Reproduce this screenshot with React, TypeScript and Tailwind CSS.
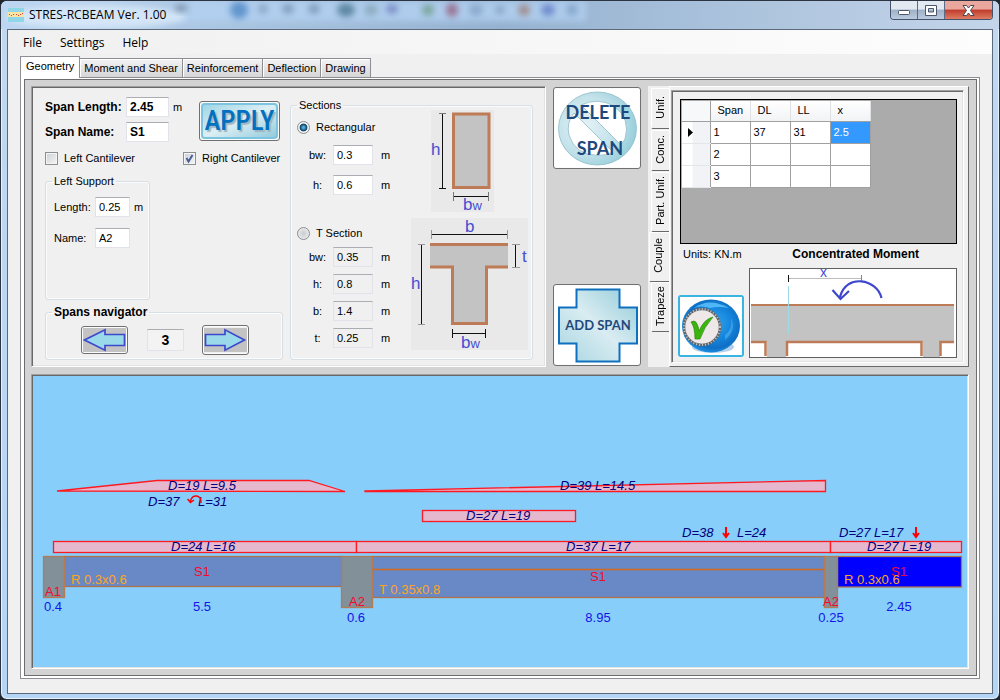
import { useState } from "react";
import type { ReactNode } from "react";

const SUNKEN =
  "border border-t-[#a0a0a0] border-l-[#a0a0a0] border-r-white border-b-white shadow-[inset_1px_1px_0_#696969,inset_-1px_-1px_0_#e3e3e3]";
const FIELD =
  "h-5 border border-[#e2e3ea] border-t-[#abadb3] px-[3px] text-black outline-none";
const PUSH =
  "rounded-[3px] border border-[#707070] bg-[#f0f0f0] shadow-[inset_0_0_0_1px_#fcfcfc] flex items-center justify-center overflow-hidden";

function AppIcon() {
  return (
    <svg width="16" height="14" viewBox="0 0 16 14" aria-hidden="true">
      <rect width="16" height="14" fill="#8fd6e6" />
      <rect y="4" width="16" height="5" fill="#fbe3a6" />
      <path d="M1 6.500h1M3 7.500h1M5 6.500h1M8 6.500h1M10 7.500h1M12 6.500h1M14 5.500h1" stroke="#d8442e" />
    </svg>
  );
}

function GlassReflections() {
  const spots = [
    [180, 7, 7, 4, "#6d8196"], [238, 9, 9, 9, "#3f7fc0"], [262, 8, 5, 5, "#7d97b5"],
    [287, 8, 6, 5, "#7089a8"], [313, 8, 6, 5, "#7089a8"], [345, 9, 9, 7, "#3d6c83"],
    [370, 9, 7, 6, "#7da0b0"], [391, 8, 6, 5, "#6876b8"], [427, 9, 6, 6, "#66967c"],
    [451, 9, 6, 7, "#91506f"], [475, 9, 7, 6, "#7a9cc0"], [499, 9, 5, 4, "#7694b4"],
    [523, 9, 6, 6, "#9a7469"], [547, 9, 7, 6, "#5470c0"], [571, 9, 6, 6, "#789ac0"],
  ] as const;
  return (
    <svg className="absolute inset-0 h-full w-full" aria-hidden="true">
      <defs>
        <filter id="soft" x="-50%" y="-50%" width="200%" height="200%">
          <feGaussianBlur stdDeviation="3" />
        </filter>
      </defs>
      <rect x="170" y="0" width="415" height="20" fill="#b3d1f2" opacity="0.800" filter="url(#soft)" />
      <ellipse cx="95" cy="16" rx="90" ry="12" fill="#dcebfa" opacity="0.800" filter="url(#soft)" />
      {spots.map(([x, y, rx, ry, fill]) => (
        <ellipse key={x} cx={x} cy={y} rx={rx} ry={ry} fill={fill} opacity="0.700" filter="url(#soft)" />
      ))}
    </svg>
  );
}

function TitleBar() {
  return (
    <header className="relative flex h-[28px] items-start overflow-hidden rounded-t-[6px] bg-linear-to-r from-[#bdd6f1] via-[#95b2d0] to-[#c4d5ea]">
      <GlassReflections />
      <div className="relative flex h-[27px] flex-1 items-center gap-[5px] pl-[7px] font-['Open_Sans',sans-serif] text-[12px] text-black">
        <AppIcon />
        <h1>STRES-RCBEAM Ver. 1.00</h1>
      </div>
      <div className="relative mr-[6px] flex h-[19px] overflow-hidden rounded-b-[4px] border border-t-0 border-[#42536b]">
        <button aria-label="Minimize" className="flex w-[27px] items-center justify-center border-r border-[#5b6d86] bg-linear-to-b from-[#e3e9f1] from-45% via-[#9fb1c7] via-50% to-[#bccbdd]">
          <svg width="13" height="6" className="mt-[6px]"><rect x="0.500" y="0.500" width="11" height="4" rx="1" fill="#fff" stroke="#4d566b" /></svg>
        </button>
        <button aria-label="Maximize" className="flex w-[27px] items-center justify-center border-r border-[#5b6d86] bg-linear-to-b from-[#e3e9f1] from-45% via-[#9fb1c7] via-50% to-[#bccbdd]">
          <svg width="12" height="11"><path fillRule="evenodd" d="M.5.5h11v10H.5zM3.500 3.500h5v3.500h-5z" fill="#fff" stroke="#4d566b" /></svg>
        </button>
        <button aria-label="Close" className="flex w-[47px] items-center justify-center bg-linear-to-b from-[#eaa79d] from-45% via-[#c0392a] via-50% to-[#dd7c62]">
          <svg width="13" height="11" viewBox="0 0 13 11"><path d="M1 .5h3.500L6.500 3 8.500.5H12L8.500 5.500 12 10.500H8.500L6.500 8 4.500 10.500H1L4.500 5.500z" fill="#fff" stroke="#4d4450" /></svg>
        </button>
      </div>
    </header>
  );
}

function GroupBox({ title, bold, className, children }: { title: string; bold?: boolean; className: string; children: ReactNode }) {
  return (
    <fieldset className={"rounded-[3px] border border-[#d5dfe5] shadow-[inset_0_0_0_1px_#fbfbfb] " + className}>
      <legend className={"ml-[6px] px-[2px] leading-[13px] " + (bold ? "text-[12px] font-bold" : "")}>{title}</legend>
      {children}
    </fieldset>
  );
}

function Check({ label, checked }: { label: string; checked?: boolean }) {
  return (
    <label className="flex h-[13px] items-center gap-[6px]">
      <span className="grid size-[13px]">
        <input type="checkbox" defaultChecked={checked} className="peer col-start-1 row-start-1 size-[13px] appearance-none border border-[#8e8f8f] bg-linear-to-br from-[#cbcfd5] to-[#f6f6f6] shadow-[inset_0_0_0_1px_#f4f4f4]" />
        <svg viewBox="0 0 13 13" className="pointer-events-none col-start-1 row-start-1 hidden peer-checked:block">
          <path d="M3.500 6 5.500 9.500 9.500 3" fill="none" stroke="#4b5f97" strokeWidth="2" />
        </svg>
      </span>
      {label}
    </label>
  );
}

function SectionRadio({ label, checked }: { label: string; checked?: boolean }) {
  return (
    <label className="flex h-[14px] items-center gap-[6px]">
      <input type="radio" name="section" defaultChecked={checked} className="-ml-px size-[13px] appearance-none rounded-full border border-[#8e8f8f] bg-radial from-[#c9ccd0] to-[#f4f4f4] checked:from-[#4fb2dc] checked:from-10% checked:via-[#123e60] checked:via-45% checked:to-[#eef2f5] checked:to-55%" />
      {label}
    </label>
  );
}

function Measure({ id, label, value, disabled }: { id: string; label: string; value: string; disabled?: boolean }) {
  return (
    <div className="grid grid-cols-[31px_40px_auto] items-center">
      <label htmlFor={id} className="text-center">{label}</label>
      <input id={id} defaultValue={value} readOnly={disabled} className={FIELD + (disabled ? " w-10 bg-[#f0f0f0]" : " w-10 bg-white")} />
      <span className="pl-[8px]">m</span>
    </div>
  );
}

function RectangleSketch() {
  return (
    <svg width="63" height="102" viewBox="431 110 63 102" className="overflow-visible font-['Liberation_Sans',sans-serif]">
      <rect x="431" y="110" width="63" height="102" fill="#e9e9e9" />
      <rect x="453.500" y="114" width="35.500" height="73.500" fill="#c3c3c3" stroke="#bd7b57" strokeWidth="3" />
      <path d="M442.500 113V188M439 188.500h7M453.500 196.500h35" stroke="#111" fill="none" />
      <path d="M439 113.500h7M453.500 192v9M488.500 192v9" stroke="#777" fill="none" />
      <text x="431" y="155" fontSize="17" fill="#474fd0">h</text>
      <text x="463" y="210" fontSize="17" fill="#474fd0">b<tspan fontSize="13">w</tspan></text>
    </svg>
  );
}

function TeeSketch() {
  return (
    <svg width="117" height="132" viewBox="411 218 117 132" className="overflow-visible font-['Liberation_Sans',sans-serif]">
      <rect x="411" y="218" width="117" height="132" fill="#e9e9e9" />
      <path d="M430 244.500H508V267H486.500V323.500H452.500V267H430Z" fill="#c3c3c3" />
      <path d="M430 244.500H508M430 267H452.500V323.500H486.500V267H508" stroke="#bd7b57" strokeWidth="3" fill="none" />
      <path d="M431 234.500h77M421.500 245v79M515.500 245v22M452 333.500h34M452.500 329v9M485.500 329v9" stroke="#111" fill="none" />
      <path d="M431.500 230v9M507.500 230v9M418 244.500h7M418 324.500h7M512 244.500h8M512 267.500h8" stroke="#999" fill="none" />
      <text x="465" y="232" fontSize="17" fill="#474fd0">b</text>
      <text x="411" y="289" fontSize="17" fill="#474fd0">h</text>
      <text x="522" y="262" fontSize="17" fill="#474fd0">t</text>
      <text x="461" y="348" fontSize="17" fill="#474fd0">b<tspan fontSize="13">w</tspan></text>
    </svg>
  );
}

function ArrowIcon({ flip }: { flip?: boolean }) {
  return (
    <svg width="43" height="24" viewBox="0 0 43 24" aria-hidden="true">
      <rect width="43" height="24" fill="#c3c3c3" />
      <path
        d={flip ? "M1.500 6.500H21V1.800L40.500 12 21 22.200V17.500H1.500Z" : "M41.500 6.500H22V1.800L1.500 12 22 22.200V17.500H41.500Z"}
        fill="#99d9ea"
        stroke="#3f48cc"
        strokeWidth="1.700"
      />
    </svg>
  );
}

function SpanEditor() {
  return (
    <section className={"flex shrink-0 items-start gap-[7px] bg-[#f0f0f0] pt-[10px] pr-[12px] pb-[6px] pl-[13px] " + SUNKEN}>
      <div className="w-[238px]">
        <div className="flex items-start">
          <div className="grid w-[154px] grid-cols-[81px_43px_auto] items-center gap-y-[5px] text-[12px] font-bold">
            <label htmlFor="span-length">Span Length:</label>
            <input id="span-length" defaultValue="2.45" className={FIELD + " w-[43px] bg-white font-bold"} />
            <span className="pl-[4px] text-[11px] font-normal">m</span>
            <label htmlFor="span-name">Span Name:</label>
            <input id="span-name" defaultValue="S1" className={FIELD + " w-[43px] bg-white font-bold"} />
          </div>
          <button className={PUSH + " mt-1 h-10 w-[81px]"}>
            <span className="flex h-[36px] w-[77px] items-center justify-center rounded-[4px] border-2 border-[#7cc4e0] bg-linear-to-br from-[#9fd6e6] via-[#dceff4] to-[#92cbdc] font-['Roboto_Condensed',Roboto,sans-serif] text-[27px] leading-[32px] font-medium text-[#0070c0] text-shadow-[2px_2px_1px_#9fb4c0]">
              APPLY
            </span>
          </button>
        </div>
        <div className="mt-[10px] grid grid-cols-[138px_auto]">
          <Check label="Left Cantilever" />
          <Check label="Right Cantilever" checked />
        </div>
        <GroupBox title="Left Support" className="mt-[10px] h-[125px] w-[105px]">
          <div className="grid grid-cols-[41px_35px_auto] items-center gap-y-[11px] pt-[9px] pl-[8px]">
            <label htmlFor="support-length">Length:</label>
            <input id="support-length" defaultValue="0.25" className={FIELD + " w-[35px] bg-white"} />
            <span className="pl-[4px]">m</span>
            <label htmlFor="support-name">Name:</label>
            <input id="support-name" defaultValue="A2" className={FIELD + " w-[35px] bg-white"} />
          </div>
        </GroupBox>
        <GroupBox title="Spans navigator" bold className="mt-[6px] h-[54px]">
          <div className="flex items-center pt-[6px] pl-[35px]">
            <button aria-label="Previous span" className={PUSH + " h-7 w-[47px]"}><ArrowIcon /></button>
            <input aria-label="Span number" readOnly value="3" className="mr-[18px] ml-[19px] h-[22px] w-[37px] border border-[#e2e3ea] border-t-[#abadb3] bg-[#f3f3f3] text-center text-[14px] font-bold outline-none" />
            <button aria-label="Next span" className={PUSH + " h-[30px] w-[47px]"}><ArrowIcon flip /></button>
          </div>
        </GroupBox>
      </div>
      <GroupBox title="Sections" className="mt-[2px] h-[261px] w-[243px]">
        <div className="-mt-[2px] flex justify-between pr-[38px] pl-[7px]">
          <div className="pt-[10px]">
            <SectionRadio label="Rectangular" checked />
            <div className="mt-[11px] flex flex-col gap-[10px] pl-1">
              <Measure id="rect-bw" label="bw:" value="0.3" />
              <Measure id="rect-h" label="h:" value="0.6" />
            </div>
          </div>
          <RectangleSketch />
        </div>
        <div className="mt-[6px] flex justify-between pr-[4px] pl-[7px]">
          <div className="pt-[8px]">
            <SectionRadio label="T Section" />
            <div className="mt-[7px] flex flex-col gap-[7px] pl-1">
              <Measure id="tee-bw" label="bw:" value="0.35" disabled />
              <Measure id="tee-h" label="h:" value="0.8" disabled />
              <Measure id="tee-b" label="b:" value="1.4" disabled />
              <Measure id="tee-t" label="t:" value="0.25" disabled />
            </div>
          </div>
          <TeeSketch />
        </div>
      </GroupBox>
    </section>
  );
}

function SpanActions() {
  return (
    <div className="flex w-[88px] shrink-0 flex-col justify-between py-px">
      <button className={PUSH + " h-[82px]"}>
        <svg width="84" height="78" viewBox="0 0 84 78" className="font-[Lato,sans-serif]">
          <defs>
            <radialGradient id="ring" cx="0.350" cy="0.450" r="0.650">
              <stop offset="0" stopColor="#e3f2f6" />
              <stop offset="0.600" stopColor="#c3e2ea" />
              <stop offset="1" stopColor="#98cfdc" />
            </radialGradient>
          </defs>
          <rect width="84" height="78" fill="#fff" />
          <path fillRule="evenodd" d="M3.500 39.500a39 36.500 0 1 1 78 0a39 36.500 0 1 1-78 0ZM19 24Q11 34 14 46Q20 66 43 66.500Q52 66.500 58 63ZM26 16Q43 8 59 17Q76 30 70 50L66 56Z" fill="url(#ring)" stroke="#8dbac8" strokeWidth="0.800" />
          <text x="43" y="30" textAnchor="middle" fontSize="18" fontWeight="700" fill="#1f497d">DELETE</text>
          <text x="45" y="66" textAnchor="middle" fontSize="18" fontWeight="700" fill="#1f497d">SPAN</text>
        </svg>
      </button>
      <button className={PUSH + " h-[82px]"}>
        <svg width="84" height="78" viewBox="0 0 84 78" className="font-[Lato,sans-serif]">
          <defs>
            <linearGradient id="cross" x1="0" y1="1" x2="1" y2="0">
              <stop offset="0" stopColor="#a6d5e1" />
              <stop offset="0.500" stopColor="#d9ecf1" />
              <stop offset="1" stopColor="#92cbd9" />
            </linearGradient>
          </defs>
          <rect width="84" height="78" fill="#fff" />
          <path d="M21.500 3.500H64.500V21.500H82V57.500H64.500V75.500H21.500V57.500H4V21.500H21.500Z" fill="url(#cross)" stroke="#0f70c0" strokeWidth="2" />
          <text x="43" y="44" textAnchor="middle" fontSize="13" fontWeight="700" fill="#1f497d">ADD SPAN</text>
        </svg>
      </button>
    </div>
  );
}

function ConfirmIcon() {
  return (
    <svg width="62" height="58" viewBox="0 0 62 58" aria-hidden="true">
      <defs>
        <radialGradient id="ball" cx="0.550" cy="0.450" r="0.550">
          <stop offset="0" stopColor="#35a6ee" />
          <stop offset="0.550" stopColor="#1485dc" />
          <stop offset="0.850" stopColor="#0f6fc4" />
          <stop offset="1" stopColor="#1c8be0" />
        </radialGradient>
      </defs>
      <rect width="62" height="58" fill="#fff" />
      <ellipse cx="33" cy="50" rx="21" ry="6" fill="#7fb0de" opacity="0.600" />
      <ellipse cx="31" cy="29" rx="29" ry="26.500" fill="url(#ball)" />
      <path d="M14 11Q29 0 49 11Q38 9 30 11Q20 8 14 11Z" fill="#60c4ff" opacity="0.800" />
      <path d="M45 38Q53 32 51 21Q57 33 45 43Z" fill="#5bbcf8" opacity="0.500" />
      <circle cx="22" cy="30" r="18" fill="#efe8e8" stroke="#60666c" strokeWidth="2.500" />
      <circle cx="22" cy="30" r="18" fill="none" stroke="#c4c8ca" strokeWidth="2" strokeDasharray="1 2" />
      <path d="M11 25Q17 21 19 34Q24 22 33 20Q24 30 20 42H15Q15 30 11 25Z" fill="#3bb50e" stroke="#258806" strokeWidth="0.700" />
    </svg>
  );
}

function MomentSketch() {
  return (
    <svg viewBox="750 269 206 88" className="h-[90px] min-w-0 flex-1 overflow-visible border border-[#606060] bg-white font-['Liberation_Sans',sans-serif]">
      <rect x="751" y="305" width="203" height="37" fill="#c3c3c3" />
      <path d="M767 341h19v16h-19zM923 341h17v16h-17z" fill="#c3c3c3" />
      <path d="M751 305H954" stroke="#bd7b57" strokeWidth="2" />
      <path d="M751 342H765.500V356M787 356V342H921.500V356M940.500 356V342H954" fill="none" stroke="#bd7b57" strokeWidth="2.500" />
      <path d="M789 278.500h73" stroke="#bdbdbd" />
      <path d="M861.500 275v7" stroke="#888" />
      <path d="M788.500 275v7" stroke="#111" />
      <path d="M788.500 286v48" stroke="#9fdbe6" />
      <text x="820" y="277" fontSize="14" fill="#474fd0">x</text>
      <path d="M881.500 298C877 279 846 273 840 297M832.500 290L840.500 299L849 291" fill="none" stroke="#3f48cc" strokeWidth="2.200" />
    </svg>
  );
}

const LOAD_TABS = [
  { name: "Unif.", size: "h-[41px] mt-[2px]" },
  { name: "Conc.", size: "h-[41px] mt-px" },
  { name: "Part. Unif.", size: "h-[60px] mt-px" },
  { name: "Couple", size: "h-[50px]" },
  { name: "Trapeze", size: "h-[50px]" },
];

const LOADS = [
  ["1", "37", "31", "2.5"],
  ["2", "", "", ""],
  ["3", "", "", ""],
];

function LoadsPanel() {
  const [active, setActive] = useState("Couple");
  return (
    <section className="flex min-w-0 flex-1 bg-[#f0f0f0]">
      <div role="tablist" aria-orientation="vertical" className="flex w-[21px] shrink-0 flex-col items-end">
        {LOAD_TABS.map((tab) => (
          <button
            key={tab.name}
            role="tab"
            aria-selected={active === tab.name}
            onClick={() => setActive(tab.name)}
            className={"flex items-center justify-center rounded-l-[2px] border-b border-l border-t border-b-[#696969] border-l-white border-t-white pb-[3px] " + tab.size + (active === tab.name ? " w-[20px] pr-[4px]" : " w-[18px] pr-[2px]")}
          >
            <span className="rotate-180 leading-[14px] whitespace-nowrap [writing-mode:vertical-rl]">{tab.name}</span>
          </button>
        ))}
      </div>
      <div className="flex min-w-0 flex-1 flex-col border border-t-white border-l-white border-r-[#696969] border-b-[#696969] p-[3px] pr-[4px] pl-px">
        <div className={"flex flex-1 flex-col pt-[8px] pr-[6px] pb-[4px] pl-[8px] " + SUNKEN}>
          <div className="h-[145px] border border-black bg-[#ababab] p-px">
            <table className="table-fixed border-collapse bg-white text-left">
              <colgroup>
                <col className="w-[28px]" />
                <col className="w-10" /><col className="w-10" /><col className="w-10" /><col className="w-10" />
              </colgroup>
              <thead>
                <tr className="h-[20px] bg-linear-to-b from-white to-[#f2f3f5]">
                  <th className="border-r border-b border-[#a0a0a0] bg-[#f6f8fa]" aria-label="Current row" />
                  {["Span", "DL", "LL", "x"].map((h) => (
                    <th key={h} scope="col" className="border-r border-b border-r-[#dfe1e4] border-b-[#a0a0a0] p-0 pl-[7px] font-normal">{h}</th>
                  ))}
                </tr>
              </thead>
              <tbody>
                {LOADS.map((row, r) => (
                  <tr key={row[0]} className="h-[22px]">
                    <th scope="row" aria-label={"Row " + row[0]} className="border-r border-b border-r-[#a0a0a0] border-b-[#e4e6e8] bg-linear-to-r from-white from-35% to-[#f1f3f6] to-40% p-0 pl-[6px]">
                      {r === 0 && <svg width="6" height="9"><path d="M0 0L5 4.500L0 9Z" /></svg>}
                    </th>
                    {row.map((value, c) => (
                      <td key={c} className={"border-r border-b border-[#a0a0a0] p-0 pl-[3px] " + (r === 0 && c === 3 ? "bg-[#3399ff] text-white" : "")}>{value}</td>
                    ))}
                  </tr>
                ))}
              </tbody>
            </table>
          </div>
          <div className="flex h-[24px] items-center justify-between pr-[38px] pb-[3px] pl-[3px]">
            <span>Units: KN.m</span>
            <h2 className="text-[12px] font-bold">Concentrated Moment</h2>
          </div>
          <div className="flex items-end gap-[5px]">
            <button aria-label="Confirm load" className="mb-px -ml-[2px] flex h-[62px] w-[66px] shrink-0 items-center justify-center overflow-hidden rounded-[3px] border-2 border-[#3ab5e2] bg-white">
              <ConfirmIcon />
            </button>
            <MomentSketch />
          </div>
        </div>
      </div>
    </section>
  );
}

function DownArrow({ x }: { x: number }) {
  return <path d={`M${x} 527V536M${x - 3} 533L${x} 537L${x + 3} 533`} fill="none" stroke="red" strokeWidth="2" />;
}

function BeamView() {
  const loads: [number, number, string][] = [
    [168, 490, "D=19 L=9.5"], [148, 506, "D=37"], [198, 506, "L=31"], [171, 551, "D=24 L=16"],
    [560, 490, "D=39 L=14.5"], [466, 520, "D=27 L=19"], [566, 551, "D=37 L=17"], [682, 537, "D=38"],
    [737, 537, "L=24"], [839, 537, "D=27 L=17"], [867, 551, "D=27 L=19"],
  ];
  const names: [number, number, string][] = [
    [202, 576, "S1"], [598, 581, "S1"], [899, 576, "S1"], [53, 596, "A1"], [357, 606, "A2"], [831, 606, "A2"],
  ];
  const sizes: [number, number, string][] = [
    [53, 611, "0.4"], [202, 611, "5.5"], [356, 622, "0.6"], [598, 622, "8.95"], [831, 622, "0.25"], [899, 611, "2.45"],
  ];
  return (
    <section className={"flex-1 bg-[#87cefa] " + SUNKEN}>
      <svg viewBox="32 375 936 292" className="block w-full font-['Liberation_Sans',sans-serif] text-[13px]">
        <g fill="#e6b8ce" stroke="#ff1a22" strokeWidth="1.300">
          <path d="M57 491L157 480.500H309L345 491.500Z" />
          <path d="M365 491L825.500 480.500V491.500H365Z" />
          <rect x="422.500" y="510.500" width="153" height="11" />
          <rect x="53.500" y="541.500" width="303" height="11" />
          <rect x="356.500" y="541.500" width="474" height="11" />
          <rect x="830.500" y="541.500" width="131" height="11" />
        </g>
        <g stroke="#b0714c" strokeWidth="1.300">
          <rect x="64.500" y="556.500" width="278" height="30" fill="#6889c5" />
          <rect x="372.500" y="556.500" width="452" height="41" fill="#6889c5" />
          <path d="M373 569.500H825" stroke="#d2691e" />
          <rect x="837.500" y="556.500" width="124" height="30.500" fill="#0000ff" />
          <g fill="#82909a" stroke="#b57b55">
            <rect x="43.500" y="556.500" width="21" height="41" />
            <rect x="341.500" y="556.500" width="31" height="51" />
            <rect x="824.500" y="556.500" width="13" height="51" />
          </g>
        </g>
        <g fill="#00007f" fontStyle="italic">
          {loads.map(([x, y, t]) => <text key={x + t} x={x} y={y}>{t}</text>)}
        </g>
        <g fill="#f5082d" textAnchor="middle">
          {names.map(([x, y, t]) => <text key={x} x={x} y={y}>{t}</text>)}
        </g>
        <g fill="#1414e6" textAnchor="middle">
          {sizes.map(([x, y, t]) => <text key={x} x={x} y={y}>{t}</text>)}
        </g>
        <g fill="#ffa51e">
          <text x="71" y="584">R 0.3x0.6</text>
          <text x="379" y="594">T 0.35x0.8</text>
          <text x="844" y="584">R 0.3x0.6</text>
        </g>
        <DownArrow x={726} />
        <DownArrow x={916} />
        <path d="M201 503C202 495 192 493 190.500 501M187.500 499L190.500 502.500L194 500" fill="none" stroke="red" strokeWidth="1.500" />
      </svg>
    </section>
  );
}

const PAGES = ["Geometry", "Moment and Shear", "Reinforcement", "Deflection", "Drawing"];

export default function App() {
  return (
    <div className="min-h-screen bg-[#20262e] font-['Liberation_Sans',Arial,sans-serif] text-[11px] leading-[13px] text-black">
      <div className="flex min-h-screen flex-col rounded-[7px] border border-[#2b3440] bg-linear-to-b from-[#c1d8f0] to-[#b5d5f6] shadow-[inset_0_0_0_1px_#e8f2fc]">
        <TitleBar />
        <main className="mx-[6px] mb-[5px] flex flex-1 flex-col border border-[#5a6a7a] bg-[#f0f0f0]">
          <nav className="flex h-[24px] items-center gap-[18px] bg-linear-to-r from-[#f0f0f0] to-[#fdfdfd] pl-[15px] font-['Open_Sans',sans-serif] text-[12px]">
            <button>File</button>
            <button>Settings</button>
            <button>Help</button>
          </nav>
          <div className="flex flex-1 flex-col pt-[2px] pr-[12px] pb-[14px] pl-[12px]">
            <div role="tablist" className="flex items-end">
              {PAGES.map((page, i) => (
                <button
                  key={page}
                  role="tab"
                  aria-selected={i === 0}
                  className={i === 0
                    ? "relative z-10 -mb-px h-[22px] border border-b-0 border-[#8c8e94] bg-white px-[5px] pb-[2px] text-[11px]"
                    : "-ml-px h-[19px] border border-b-0 border-[#8c8e94] bg-linear-to-b from-[#f3f3f3] to-[#d6d6d6] px-[4px] shadow-[inset_1px_1px_0_#fff]"}
                >
                  {page}
                </button>
              ))}
            </div>
            <div className="flex flex-1 flex-col border border-[#8c8e94] bg-white p-[2px] pl-[3px] pt-px">
              <div className="flex flex-1 flex-col gap-[7px] border border-[#6d6d6d] bg-[#d3d3d3] py-[6px] pr-[7px] pl-[6px]">
                <div className="flex gap-[7px]">
                  <SpanEditor />
                  <SpanActions />
                  <LoadsPanel />
                </div>
                <BeamView />
              </div>
            </div>
          </div>
        </main>
      </div>
    </div>
  );
}
